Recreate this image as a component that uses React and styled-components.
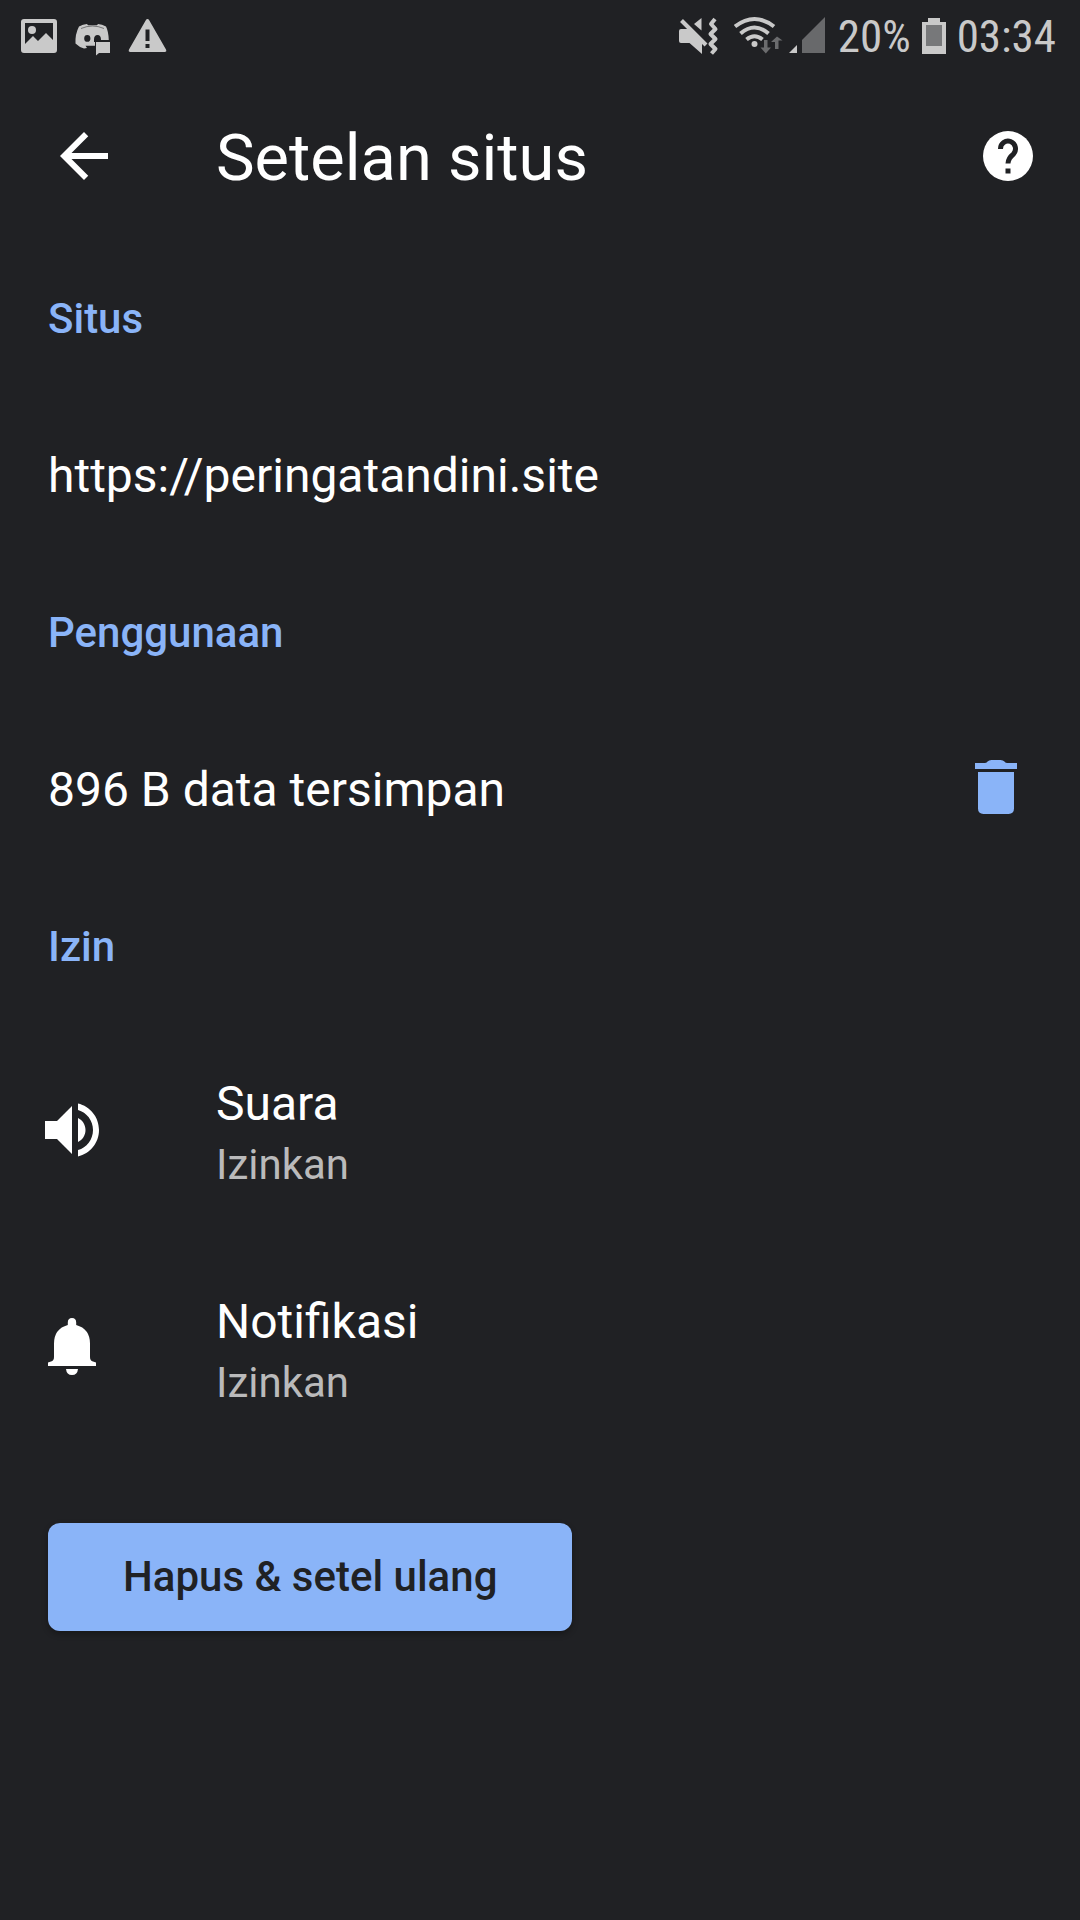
import React from "react";
import styled, { createGlobalStyle } from "styled-components";

const GlobalStyle = createGlobalStyle`
  * { box-sizing: border-box; }
  body {
    margin: 0;
    background: #202124;
    color: #fff;
    font-family: Roboto, "Noto Sans", sans-serif;
  }
`;

const Page = styled.div`
  min-height: 100vh;
  display: flex;
  flex-direction: column;
  background: #202124;
`;

const StatusBar = styled.div`
  display: flex;
  align-items: center;
  justify-content: space-between;
  height: 72px;
  padding: 0 24px 0 20px;
  color: #c9c9c9;
`;

const StatusGroup = styled.div`
  display: flex;
  align-items: center;
  gap: ${(p) => p.$gap}px;
`;

const StatusText = styled.span`
  font-family: "Roboto Condensed", "Liberation Sans Narrow", Roboto, sans-serif;
  font-size: 45px;
  line-height: 54px;
  padding-top: 2px;
`;

const Glyph = styled.svg`
  display: block;
  flex: none;
  fill: currentColor;
`;

const Toolbar = styled.header`
  display: flex;
  align-items: center;
  height: 168px;
  padding: 0 42px 0 48px;
`;

const IconButton = styled.button`
  display: flex;
  flex: none;
  padding: 0;
  border: 0;
  background: none;
  color: ${(p) => p.$color || "#fff"};
  cursor: pointer;
`;

const Title = styled.h1`
  flex: 1;
  margin: 0;
  padding: 4px 0 0 96px;
  font-size: 65px;
  line-height: 78px;
  font-weight: 400;
`;

const Content = styled.main`
  padding: 1px 48px 48px;
`;

const SectionTitle = styled.h2`
  display: flex;
  align-items: center;
  height: 156px;
  margin: 0;
  color: #8ab4f8;
  font-size: 42px;
  line-height: 50px;
  font-weight: 500;
`;

const Item = styled.div`
  display: flex;
  align-items: center;
  justify-content: space-between;
  height: 158px;
`;

const Primary = styled.span`
  font-size: 48px;
  line-height: 56px;
`;

const Secondary = styled.span`
  color: #bababb;
  font-size: 42px;
  line-height: 50px;
`;

const ItemAction = styled.div`
  padding-bottom: 6px;
`;

const Permission = styled.button`
  display: grid;
  grid-template-columns: 168px 1fr;
  align-items: center;
  width: 100%;
  height: 218px;
  padding: 0 0 2px;
  border: 0;
  background: none;
  color: inherit;
  font: inherit;
  text-align: left;
  cursor: pointer;
`;

const PermissionIcon = styled.span`
  display: flex;
  margin-left: -12px;
  padding-bottom: 6px;
`;

const PermissionText = styled.span`
  display: flex;
  flex-direction: column;
  gap: 8px;
`;

const ResetButton = styled.button`
  display: block;
  height: 108px;
  margin-top: 62px;
  padding: 0 75px;
  border: 0;
  border-radius: 12px;
  background: #8ab4f8;
  box-shadow: 0 3px 6px rgba(0, 0, 0, 0.3);
  color: #202124;
  font-family: inherit;
  font-size: 42px;
  line-height: 50px;
  font-weight: 500;
  cursor: pointer;
`;

const Icon = ({ size = 72, children }) => (
  <Glyph width={size} height={size} viewBox="0 0 24 24" aria-hidden="true">
    {children}
  </Glyph>
);

const StatusIcon = ({ width, label, children }) => (
  <Glyph width={width} height="40" viewBox={`0 0 ${width} 40`} role="img" aria-label={label}>
    {children}
  </Glyph>
);

export default function App() {
  return (
    <Page>
      <GlobalStyle />
      <StatusBar>
        <StatusGroup $gap={16}>
          <StatusIcon width={38} label="Gambar">
            <path
              fillRule="evenodd"
              d="M4 3h30q3 0 3 3v28q0 3-3 3H4q-3 0-3-3V6q0-3 3-3zM5 7v21l8-8 5 5 8-8 7 7V7z"
            />
            <circle cx="12" cy="14" r="4" />
          </StatusIcon>
          <StatusIcon width={38} label="Discord">
            <path
              fillRule="evenodd"
              d="M5 10.500Q9 8.200 13 8l1 1.200h9L24 8q4 .2 8 2.500 2.500 5 2.800 13.500H21v5.700H11.500l1.500 2.200-3 .6Q5 31 1.500 27.500 1 18 5 10.500zM13.300 19a3.100 3.400 0 1 0 .01 6.800 3.100 3.400 0 1 0-.01-6.800zM23.500 19q-3.500 0-3.500 4.500V26h2v-2h5q0-5-3.500-5z"
            />
            <path d="M7 12.500Q18.500 7.500 30 12.500" fill="none" stroke="#202124" strokeOpacity="0.5" strokeWidth="1" />
            <path d="M20.500 24H37v2H20.500z" fill="#202124" />
            <path d="M22 26h14v11H25l-3 2.500z" />
          </StatusIcon>
          <StatusIcon width={40} label="Peringatan">
            <path
              fillRule="evenodd"
              d="M19.500 3q1 0 1.700 1.200L38 33.500q1 2.500-1.500 2.500h-34Q0 36 1 33.500L17.800 4.200Q18.500 3 19.500 3zM17.500 13.500v11.500h4V13.500zM17.500 28v4h4v-4z"
            />
          </StatusIcon>
        </StatusGroup>
        <StatusGroup $gap={10}>
          <StatusGroup $gap={4}>
            <StatusIcon width={52} label="Getar">
              <path d="M16 8l7.500-6v12.500z" />
              <path d="M3 13h7l14 14v11L11.500 27H3q-2 0-2-2V15q0-2 2-2z" />
              <path d="M6.500 3L31 27.500" stroke="#202124" strokeWidth="3" />
              <path d="M3.500 4.500L28 29" stroke="currentColor" strokeWidth="4" />
              <path
                d="M37 3l-4 5 4.500 5-5 5 5 5-5 5 5 5-4 4.500"
                fill="none"
                stroke="currentColor"
                strokeWidth="4"
                strokeLinejoin="round"
              />
            </StatusIcon>
            <StatusIcon width={50} label="Wi-Fi">
              <g fill="none" stroke="currentColor" strokeWidth="4">
                <path d="M1 10.500Q20.500-4.500 40 10.500" />
                <path d="M6.500 17.500Q20.500 5.500 34.500 17.500" />
                <path d="M12.500 23.500Q20.500 17 28.500 23.500" />
              </g>
              <circle cx="20.500" cy="28" r="3" />
              <path
                d="M30 24h3.500v7.500H37L31.800 37.500 26.500 31.500H30zM41 33h3.500v-8.500H48.500L43 20.500 37 26h4z"
                fill="#6b6c6e"
              />
            </StatusIcon>
            <StatusIcon width={40} label="Sinyal">
              <path d="M1 37l8-8v8z" />
              <path d="M14 37V24L37 1v36z" fill="#68696b" />
            </StatusIcon>
          </StatusGroup>
          <StatusText>20%</StatusText>
          <StatusIcon width={26} label="Baterai">
            <path d="M7 2h12v4h6v32H1V6h6z" />
            <path d="M5 9h16v21H5z" fill="#77787a" />
          </StatusIcon>
          <StatusText>03:34</StatusText>
        </StatusGroup>
      </StatusBar>

      <Toolbar>
        <IconButton aria-label="Kembali">
          <Icon>
            <path d="M20 11H7.830l5.590-5.590L12 4l-8 8 8 8 1.410-1.410L7.830 13H20v-2z" />
          </Icon>
        </IconButton>
        <Title>Setelan situs</Title>
        <IconButton aria-label="Bantuan">
          <Icon size={60}>
            <circle cx="12" cy="12" r="10" />
            <path
              d="M9 9.200A3 3.100 0 1 1 14.200 11.200Q12 13 12 15"
              fill="none"
              stroke="#202124"
              strokeWidth="2"
            />
            <path d="M11 17h2v2h-2z" fill="#202124" />
          </Icon>
        </IconButton>
      </Toolbar>

      <Content>
        <section>
          <SectionTitle>Situs</SectionTitle>
          <Item>
            <Primary>https://peringatandini.site</Primary>
          </Item>
        </section>

        <section>
          <SectionTitle>Penggunaan</SectionTitle>
          <Item>
            <Primary>896 B data tersimpan</Primary>
            <ItemAction>
              <IconButton $color="#8ab4f8" aria-label="Hapus data">
                <Icon>
                  <path d="M6 7h12v12.200q0 1.800-1.800 1.800H7.800Q6 21 6 19.200zM5 4h3.200q.6 0 1-.5t1.300-.5h3q.9 0 1.300.5t1 .5H19v2H5z" />
                </Icon>
              </IconButton>
            </ItemAction>
          </Item>
        </section>

        <section>
          <SectionTitle>Izin</SectionTitle>
          <Permission>
            <PermissionIcon>
              <Icon>
                <path d="M3 9v6h4l5 5V4L7 9zM14 8v8c1.500-.7 2.500-2.200 2.500-4S15.500 8.700 14 8zM14 3.200v2.100c2.900.8 5 3.500 5 6.700s-2.100 5.900-5 6.700v2.100c4-.9 7-4.500 7-8.800s-3-7.900-7-8.800z" />
              </Icon>
            </PermissionIcon>
            <PermissionText>
              <Primary>Suara</Primary>
              <Secondary>Izinkan</Secondary>
            </PermissionText>
          </Permission>
          <Permission>
            <PermissionIcon>
              <Icon>
                <path d="M12 2q1.400 0 1.400 1.500v.8Q18 5.600 18 10.500v4.500q0 1.200 1 1.500l1 .3V18H4v-1.200l1-.3q1-.3 1-1.500v-4.500Q6 5.600 10.600 4.300v-.8Q10.600 2 12 2zM10 19h4q-.2 2-2 2t-2-2z" />
              </Icon>
            </PermissionIcon>
            <PermissionText>
              <Primary>Notifikasi</Primary>
              <Secondary>Izinkan</Secondary>
            </PermissionText>
          </Permission>
        </section>

        <ResetButton>Hapus &amp; setel ulang</ResetButton>
      </Content>
    </Page>
  );
}
